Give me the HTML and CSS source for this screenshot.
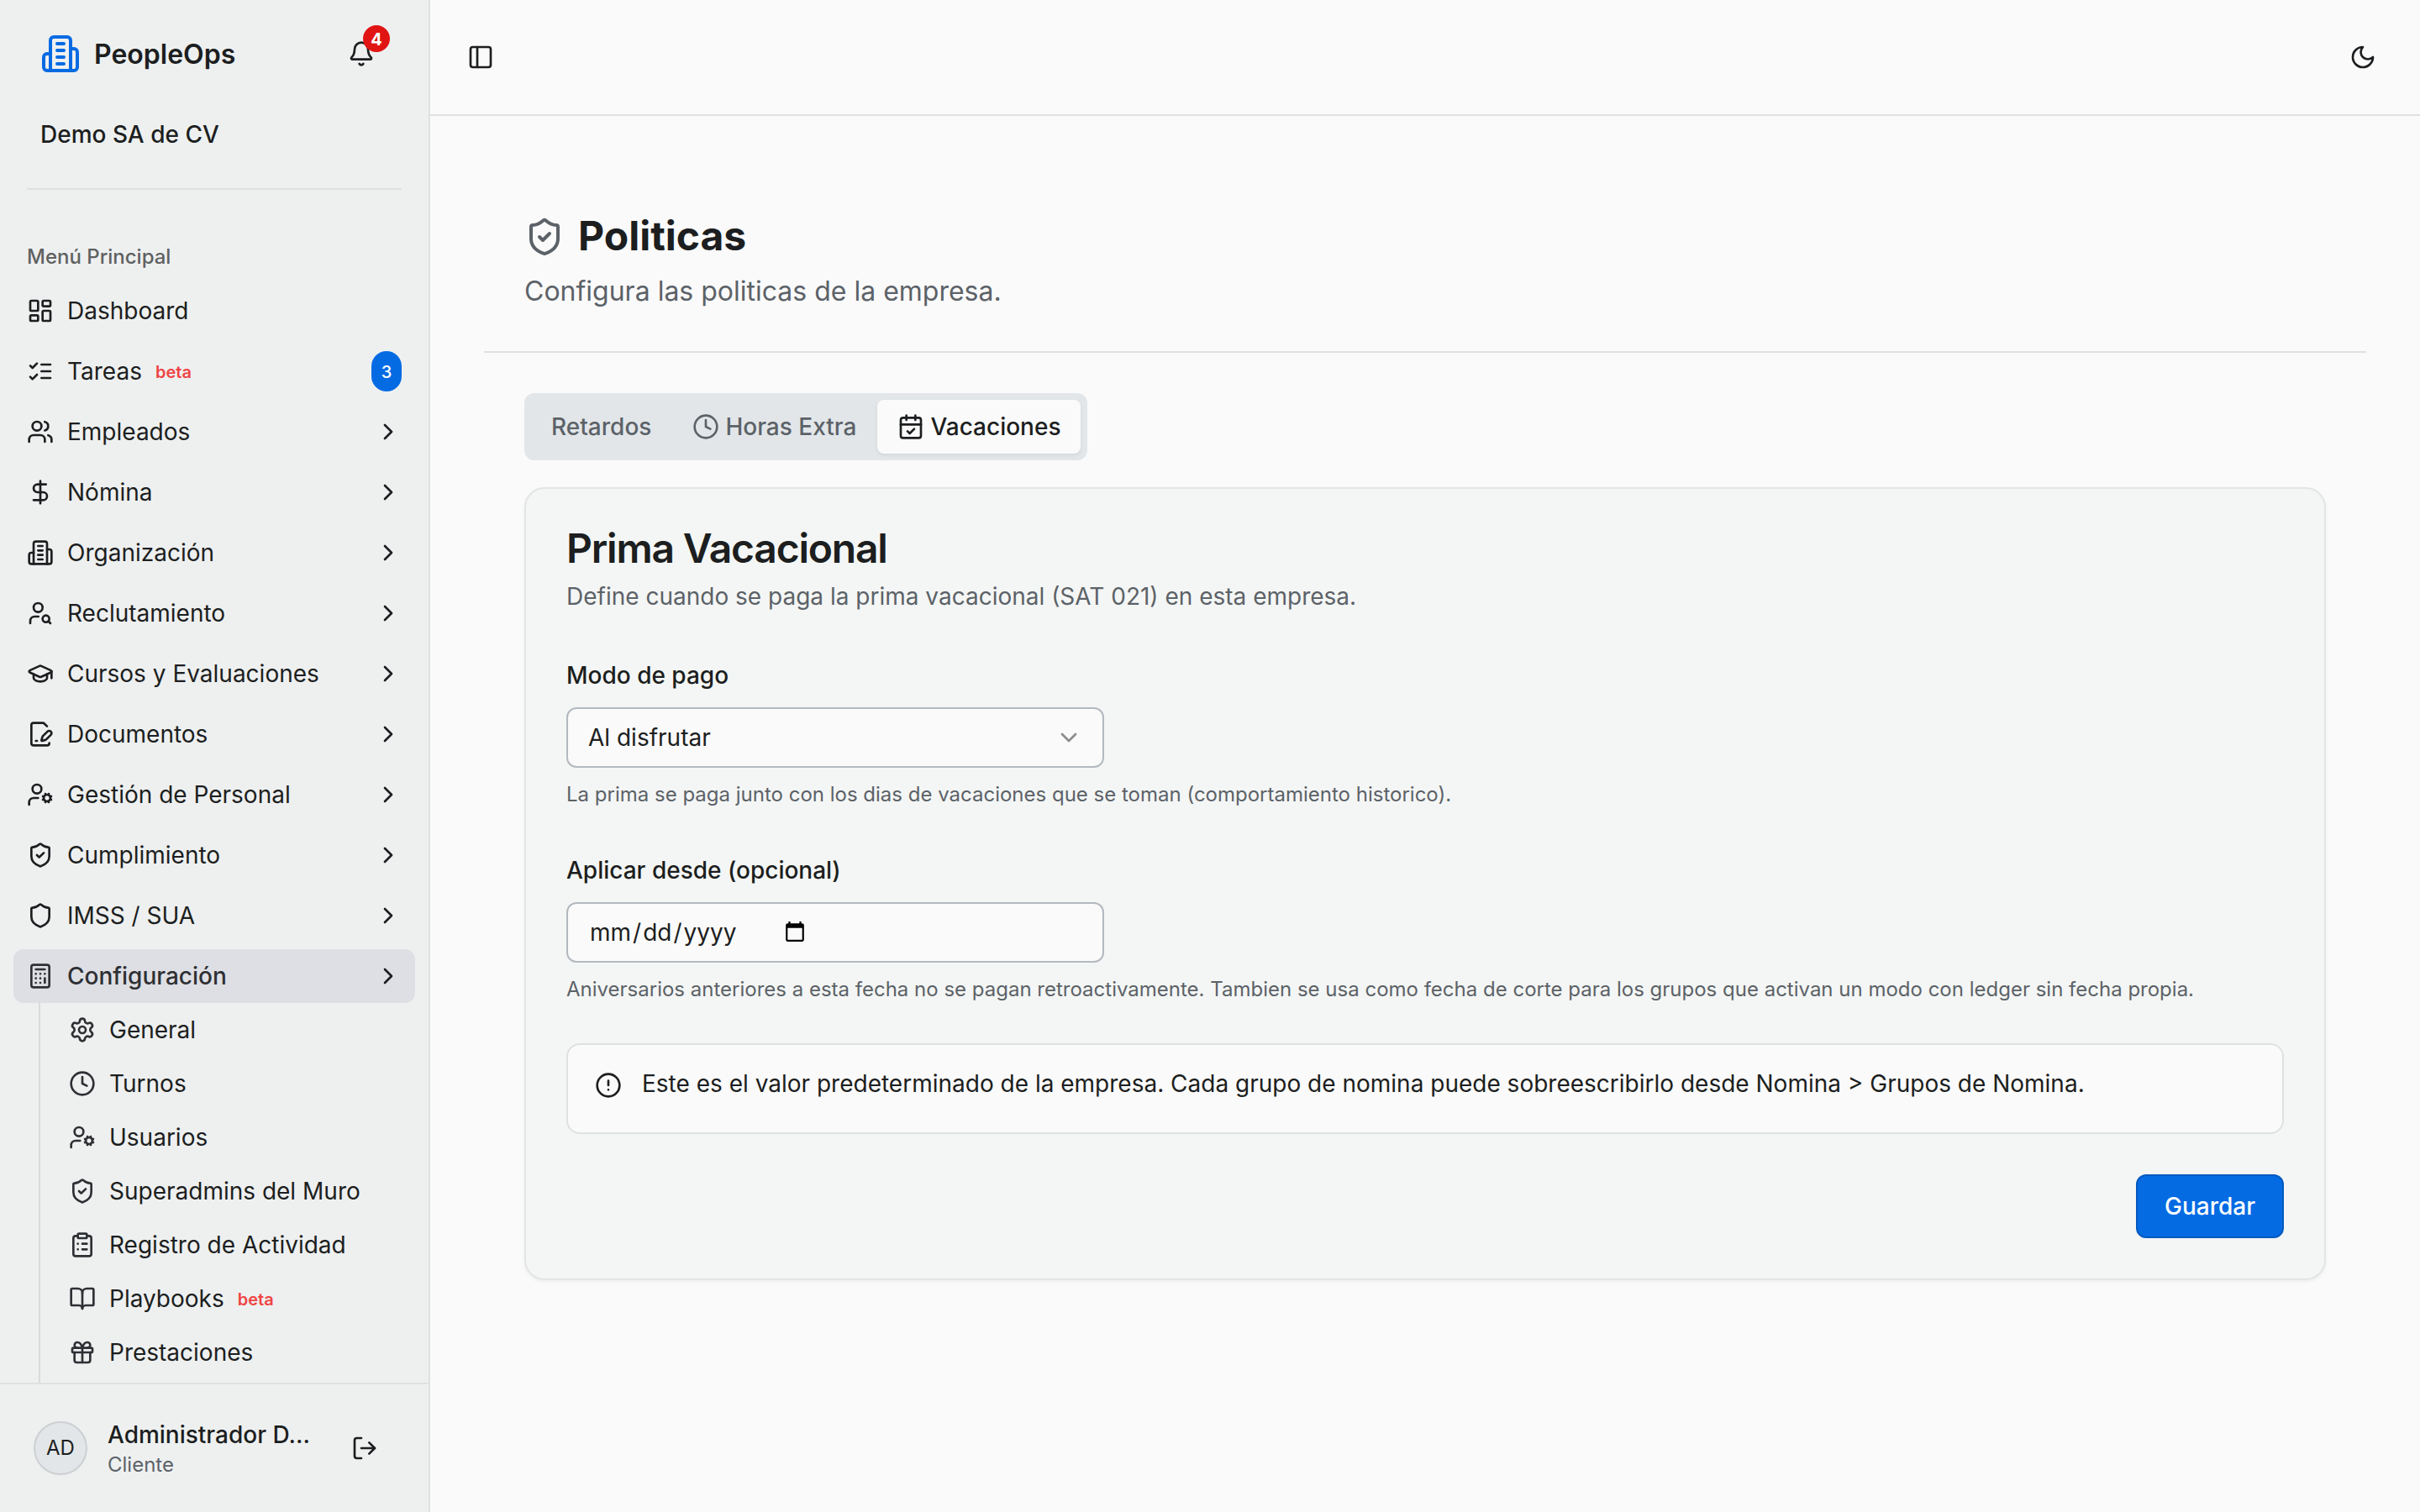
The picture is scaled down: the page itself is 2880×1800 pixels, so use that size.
FILE: index.html
```html
<!DOCTYPE html>
<html lang="es">
<head>
<meta charset="utf-8">
<title>PeopleOps - Politicas</title>
<link rel="stylesheet" href="styles.css">
</head>
<body>
<svg class="sprite" aria-hidden="true">
  <symbol id="building" viewBox="0 0 24 24"><path d="M6 22V4a2 2 0 0 1 2-2h8a2 2 0 0 1 2 2v18Z"/><path d="M6 12H4a2 2 0 0 0-2 2v6a2 2 0 0 0 2 2h2"/><path d="M18 9h2a2 2 0 0 1 2 2v9a2 2 0 0 1-2 2h-2"/><path d="M10 6h4M10 10h4M10 14h4M10 18h4"/></symbol>
  <symbol id="bell" viewBox="0 0 24 24"><path d="M10.268 21a2 2 0 0 0 3.464 0"/><path d="M3.262 15.326A1 1 0 0 0 4 17h16a1 1 0 0 0 .74-1.673C19.41 13.956 18 12.499 18 8A6 6 0 0 0 6 8c0 4.499-1.411 5.956-2.738 7.326"/></symbol>
  <symbol id="dashboard" viewBox="0 0 24 24"><rect width="7" height="9" x="3" y="3" rx="1"/><rect width="7" height="5" x="14" y="3" rx="1"/><rect width="7" height="9" x="14" y="12" rx="1"/><rect width="7" height="5" x="3" y="16" rx="1"/></symbol>
  <symbol id="checks" viewBox="0 0 24 24"><path d="m3 17 2 2 4-4"/><path d="m3 7 2 2 4-4"/><path d="M13 6h8M13 12h8M13 18h8"/></symbol>
  <symbol id="users" viewBox="0 0 24 24"><path d="M16 21v-2a4 4 0 0 0-4-4H6a4 4 0 0 0-4 4v2"/><path d="M16 3.128a4 4 0 0 1 0 7.744"/><path d="M22 21v-2a4 4 0 0 0-3-3.87"/><circle cx="9" cy="7" r="4"/></symbol>
  <symbol id="dollar" viewBox="0 0 24 24"><path d="M12 2v20"/><path d="M17 5H9.5a3.5 3.5 0 0 0 0 7h5a3.5 3.5 0 0 1 0 7H6"/></symbol>
  <symbol id="user-search" viewBox="0 0 24 24"><circle cx="10" cy="7" r="4"/><path d="M10.3 15H7a4 4 0 0 0-4 4v2"/><circle cx="17" cy="17" r="3"/><path d="m21 21-1.9-1.9"/></symbol>
  <symbol id="cap" viewBox="0 0 24 24"><path d="M21.42 10.922a1 1 0 0 0-.019-1.838L12.83 5.18a2 2 0 0 0-1.66 0L2.6 9.08a1 1 0 0 0 0 1.832l8.57 3.908a2 2 0 0 0 1.66 0z"/><path d="M22 10v6"/><path d="M6 12.5V16a6 3 0 0 0 12 0v-3.5"/></symbol>
  <symbol id="file-pen" viewBox="0 0 24 24"><path d="m18 5-2.414-2.414A2 2 0 0 0 14.172 2H6a2 2 0 0 0-2 2v16a2 2 0 0 0 2 2h12a2 2 0 0 0 2-2"/><path d="M21.378 12.626a1 1 0 0 0-3.004-3.004l-4.01 4.012a2 2 0 0 0-.506.854l-.837 2.87a.5.5 0 0 0 .62.62l2.87-.837a2 2 0 0 0 .854-.506z"/><path d="M8 18h1"/></symbol>
  <symbol id="user-cog" viewBox="0 0 24 24"><path d="M10 15H6a4 4 0 0 0-4 4v2"/><path d="m14.305 16.53.923-.382"/><path d="m15.228 13.852-.923-.383"/><path d="m16.852 12.228-.383-.923"/><path d="m16.852 17.772-.383.924"/><path d="m19.148 12.228.383-.923"/><path d="m19.53 18.696-.382-.924"/><path d="m20.772 13.852.924-.383"/><path d="m20.772 16.148.924.383"/><circle cx="18" cy="15" r="3"/><circle cx="9" cy="7" r="4"/></symbol>
  <symbol id="shield" viewBox="0 0 24 24"><path d="M20 13c0 5-3.5 7.5-7.66 8.95a1 1 0 0 1-.67-.01C7.5 20.5 4 18 4 13V6a1 1 0 0 1 1-1c2 0 4.5-1.2 6.24-2.72a1.17 1.17 0 0 1 1.52 0C14.51 3.81 17 5 19 5a1 1 0 0 1 1 1z"/></symbol>
  <symbol id="shield-check" viewBox="0 0 24 24"><path d="M20 13c0 5-3.5 7.5-7.66 8.95a1 1 0 0 1-.67-.01C7.5 20.5 4 18 4 13V6a1 1 0 0 1 1-1c2 0 4.5-1.2 6.24-2.72a1.17 1.17 0 0 1 1.52 0C14.51 3.81 17 5 19 5a1 1 0 0 1 1 1z"/><path d="m9 12 2 2 4-4"/></symbol>
  <symbol id="calculator" viewBox="0 0 24 24"><rect width="16" height="20" x="4" y="2" rx="2"/><path d="M8 6h8M16 14v4M16 10h.01M12 10h.01M8 10h.01M12 14h.01M8 14h.01M12 18h.01M8 18h.01"/></symbol>
  <symbol id="settings" viewBox="0 0 24 24"><path d="M9.671 4.136a2.34 2.34 0 0 1 4.659 0 2.34 2.34 0 0 0 3.319 1.915 2.34 2.34 0 0 1 2.33 4.033 2.34 2.34 0 0 0 0 3.831 2.34 2.34 0 0 1-2.33 4.033 2.34 2.34 0 0 0-3.319 1.915 2.34 2.34 0 0 1-4.659 0 2.34 2.34 0 0 0-3.32-1.915 2.34 2.34 0 0 1-2.33-4.033 2.34 2.34 0 0 0 0-3.831A2.34 2.34 0 0 1 6.35 6.051a2.34 2.34 0 0 0 3.319-1.915"/><circle cx="12" cy="12" r="3"/></symbol>
  <symbol id="clock" viewBox="0 0 24 24"><circle cx="12" cy="12" r="10"/><path d="M12 6v6l4 2"/></symbol>
  <symbol id="clipboard" viewBox="0 0 24 24"><rect width="8" height="4" x="8" y="2" rx="1"/><path d="M16 4h2a2 2 0 0 1 2 2v14a2 2 0 0 1-2 2H6a2 2 0 0 1-2-2V6a2 2 0 0 1 2-2h2"/><path d="M12 11h4M12 16h4M8 11h.01M8 16h.01"/></symbol>
  <symbol id="book" viewBox="0 0 24 24"><path d="M12 7v14"/><path d="M3 18a1 1 0 0 1-1-1V4a1 1 0 0 1 1-1h5a4 4 0 0 1 4 4 4 4 0 0 1 4-4h5a1 1 0 0 1 1 1v13a1 1 0 0 1-1 1h-6a3 3 0 0 0-3 3 3 3 0 0 0-3-3z"/></symbol>
  <symbol id="gift" viewBox="0 0 24 24"><rect width="18" height="4" x="3" y="8" rx="1"/><path d="M12 8v13"/><path d="M19 12v7a2 2 0 0 1-2 2H7a2 2 0 0 1-2-2v-7"/><path d="M7.5 8a2.5 2.5 0 0 1 0-5A4.8 8 0 0 1 12 8a4.8 8 0 0 1 4.5-5 2.5 2.5 0 0 1 0 5"/></symbol>
  <symbol id="logout" viewBox="0 0 24 24"><path d="m16 17 5-5-5-5"/><path d="M21 12H9"/><path d="M9 21H5a2 2 0 0 1-2-2V5a2 2 0 0 1 2-2h4"/></symbol>
  <symbol id="panel" viewBox="0 0 24 24"><rect width="18" height="18" x="3" y="3" rx="2"/><path d="M9 3v18"/></symbol>
  <symbol id="moon" viewBox="0 0 24 24"><path d="M12 3a6 6 0 0 0 9 9 9 9 0 1 1-9-9Z"/></symbol>
  <symbol id="calendar" viewBox="0 0 24 24"><path d="M8 2v4M16 2v4"/><rect width="18" height="18" x="3" y="4" rx="2"/><path d="M3 10h18"/><path d="m9 16 2 2 4-4"/></symbol>
  <symbol id="alert" viewBox="0 0 24 24"><circle cx="12" cy="12" r="10"/><path d="M12 8v4M12 16h.01"/></symbol>
  <symbol id="right" viewBox="0 0 24 24"><path d="m9 18 6-6-6-6"/></symbol>
  <symbol id="down" viewBox="0 0 24 24"><path d="m6 9 6 6 6-6"/></symbol>
</svg>
<div class="app">
  <aside class="sidebar">
    <div class="brand">
      <svg class="icon brand-logo"><use href="#building"/></svg>
      <span class="brand-name">PeopleOps</span>
      <div class="bell"><svg class="icon"><use href="#bell"/></svg><span class="bell-count">4</span></div>
    </div>
    <div class="company">Demo SA de CV</div>
    <div class="side-rule"></div>
    <nav class="nav">
      <div class="nav-label">Menú Principal</div>
      <ul class="menu">
        <li class="item"><svg class="icon"><use href="#dashboard"/></svg><span>Dashboard</span></li>
        <li class="item"><svg class="icon"><use href="#checks"/></svg><span>Tareas</span><span class="beta">beta</span><span class="count">3</span></li>
        <li class="item"><svg class="icon"><use href="#users"/></svg><span>Empleados</span><svg class="icon chev"><use href="#right"/></svg></li>
        <li class="item"><svg class="icon"><use href="#dollar"/></svg><span>Nómina</span><svg class="icon chev"><use href="#right"/></svg></li>
        <li class="item"><svg class="icon"><use href="#building"/></svg><span>Organización</span><svg class="icon chev"><use href="#right"/></svg></li>
        <li class="item"><svg class="icon"><use href="#user-search"/></svg><span>Reclutamiento</span><svg class="icon chev"><use href="#right"/></svg></li>
        <li class="item"><svg class="icon"><use href="#cap"/></svg><span>Cursos y Evaluaciones</span><svg class="icon chev"><use href="#right"/></svg></li>
        <li class="item"><svg class="icon"><use href="#file-pen"/></svg><span>Documentos</span><svg class="icon chev"><use href="#right"/></svg></li>
        <li class="item"><svg class="icon"><use href="#user-cog"/></svg><span>Gestión de Personal</span><svg class="icon chev"><use href="#right"/></svg></li>
        <li class="item"><svg class="icon"><use href="#shield-check"/></svg><span>Cumplimiento</span><svg class="icon chev"><use href="#right"/></svg></li>
        <li class="item"><svg class="icon"><use href="#shield"/></svg><span>IMSS / SUA</span><svg class="icon chev"><use href="#right"/></svg></li>
        <li class="item active"><svg class="icon"><use href="#calculator"/></svg><span>Configuración</span><svg class="icon chev"><use href="#right"/></svg></li>
      </ul>
      <ul class="submenu">
        <li class="subitem"><svg class="icon"><use href="#settings"/></svg><span>General</span></li>
        <li class="subitem"><svg class="icon"><use href="#clock"/></svg><span>Turnos</span></li>
        <li class="subitem"><svg class="icon"><use href="#user-cog"/></svg><span>Usuarios</span></li>
        <li class="subitem"><svg class="icon"><use href="#shield-check"/></svg><span>Superadmins del Muro</span></li>
        <li class="subitem"><svg class="icon"><use href="#clipboard"/></svg><span>Registro de Actividad</span></li>
        <li class="subitem"><svg class="icon"><use href="#book"/></svg><span>Playbooks</span><span class="beta">beta</span></li>
        <li class="subitem"><svg class="icon"><use href="#gift"/></svg><span>Prestaciones</span></li>
      </ul>
    </nav>
    <div class="account">
      <div class="avatar">AD</div>
      <div class="who"><div class="who-name">Administrador D...</div><div class="who-role">Cliente</div></div>
      <svg class="icon"><use href="#logout"/></svg>
    </div>
  </aside>
  <div class="page">
    <header class="topbar">
      <svg class="icon"><use href="#panel"/></svg>
      <svg class="icon"><use href="#moon"/></svg>
    </header>
    <main class="content">
      <div class="page-head">
        <h1 class="title"><svg class="icon title-icon"><use href="#shield-check"/></svg><span class="title-text">Politicas</span></h1>
        <p class="subtitle">Configura las politicas de la empresa.</p>
      </div>
      <div class="body">
        <div class="tabs">
          <div class="tab">Retardos</div>
          <div class="tab"><svg class="icon"><use href="#clock"/></svg><span>Horas Extra</span></div>
          <div class="tab selected"><svg class="icon"><use href="#calendar"/></svg><span>Vacaciones</span></div>
        </div>
        <section class="card">
          <h2 class="card-title">Prima Vacacional</h2>
          <p class="card-desc">Define cuando se paga la prima vacacional (SAT 021) en esta empresa.</p>
          <div class="field">
            <label class="label">Modo de pago</label>
            <div class="control select"><span>Al disfrutar</span><svg class="icon"><use href="#down"/></svg></div>
            <p class="help">La prima se paga junto con los dias de vacaciones que se toman (comportamiento historico).</p>
          </div>
          <div class="field">
            <label class="label">Aplicar desde (opcional)</label>
            <div class="control date"><span class="part">mm</span>/<span class="part">dd</span>/<span class="part">yyyy</span>
              <svg class="date-icon" viewBox="0 0 24 24"><path d="M20 3h-1V1h-2v2H7V1H5v2H4c-1.100 0-2 .9-2 2v16c0 1.100.9 2 2 2h16c1.100 0 2-.9 2-2V5c0-1.100-.9-2-2-2zm0 18H4V8h16v13z"/></svg>
            </div>
            <p class="help">Aniversarios anteriores a esta fecha no se pagan retroactivamente. Tambien se usa como fecha de corte para los grupos que activan un modo con ledger sin fecha propia.</p>
          </div>
          <div class="alert"><svg class="icon"><use href="#alert"/></svg><p class="alert-text">Este es el valor predeterminado de la empresa. Cada grupo de nomina puede sobreescribirlo desde Nomina &gt; Grupos de Nomina.</p></div>
          <div class="actions"><button class="save">Guardar</button></div>
        </section>
      </div>
    </main>
  </div>
</div>
</body>
</html>
```
FILE: styles.css
```css
* { box-sizing: border-box; margin: 0; padding: 0; }
body { font-family: Inter, "Liberation Sans", sans-serif; font-size: 28px; line-height: 40px; color: #1c1e20; background: #fafafa; }
ul { list-style: none; }
.sprite { position: absolute; width: 0; height: 0; }
.icon { width: 32px; height: 32px; flex: none; fill: none; stroke: currentColor; stroke-width: 2; stroke-linecap: round; stroke-linejoin: round; }
.app { display: flex; width: 2880px; height: 1800px; overflow: hidden; }

.sidebar { display: flex; flex-direction: column; width: 512px; flex: none; padding-top: 16px; background: #eef0f0; border-right: 2px solid #dfe1e1; }
.brand { display: flex; align-items: center; height: 96px; padding: 0 64px 0 48px; }
.brand-logo { width: 48px; height: 48px; color: #056be3; }
.brand-name { margin-left: 16px; padding-top: 2px; font-size: 32px; font-weight: 600; }
.bell { position: relative; display: flex; margin-left: auto; }
.bell-count { position: absolute; left: 18px; top: -18px; width: 32px; height: 32px; border-radius: 50%; background: #e11414; color: #fff; font-size: 20px; line-height: 34px; font-weight: 700; text-align: center; }
.company { height: 96px; padding-left: 48px; line-height: 96px; font-weight: 500; }
.side-rule { height: 2px; margin: 16px 32px 0; flex: none; background: #dfe1e1; }
.nav { flex: 1; min-height: 0; margin-top: 48px; padding: 0 16px; overflow: hidden; }
.nav-label { height: 64px; padding-left: 16px; font-size: 24px; line-height: 64px; font-weight: 500; color: #5f6161; }
.menu { display: flex; flex-direction: column; gap: 8px; }
.item { display: flex; align-items: center; height: 64px; padding: 0 16px; border-radius: 12px; }
.item > .icon:first-child { margin-right: 16px; }
.item.active { background: #dedfe4; color: #2e3034; font-weight: 500; }
.item .chev { margin-left: auto; color: #1c1e20; }
.beta { margin-left: 16px; padding-top: 2px; color: #ef4444; font-size: 20px; font-weight: 600; }
.count { width: 36px; height: 48px; margin-left: auto; border-radius: 18px; background: #056be3; color: #fff; font-size: 20px; line-height: 50px; font-weight: 500; text-align: center; }
.submenu { margin-left: 30px; padding: 0 0 16px 34px; border-left: 2px solid #d8dadb; }
.subitem { display: flex; align-items: center; height: 64px; }
.subitem > .icon { margin-right: 16px; color: #2e3034; }
.account { display: flex; align-items: center; height: 154px; flex: none; padding: 0 60px 0 40px; border-top: 2px solid #dfe1e1; }
.avatar { width: 64px; height: 64px; border: 2px solid #cdcfd2; border-radius: 50%; background: #e2e6e9; font-size: 24px; line-height: 60px; text-align: center; }
.who { flex: 1; margin-left: 24px; }
.who-name { font-weight: 500; white-space: nowrap; }
.who-role { font-size: 24px; line-height: 32px; color: #5c6268; }

.page { display: flex; flex-direction: column; flex: 1; }
.topbar { display: flex; align-items: center; justify-content: space-between; height: 138px; padding: 0 52px 0 44px; border-bottom: 2px solid #dfe1e1; }
.content { padding: 112px 64px 0; }
.page-head { height: 170px; padding-left: 48px; border-bottom: 2px solid #dfe1e1; }
.title { display: flex; align-items: center; gap: 16px; height: 64px; font-size: 48px; font-weight: 700; line-height: 62px; }
.title-text { padding-bottom: 2px; }
.title-icon { width: 48px; height: 48px; color: #5c6268; }
.subtitle { margin-top: 9px; font-size: 32px; line-height: 48px; color: #5c6268; }
.body { padding: 48px 48px 0; }
.tabs { display: inline-flex; gap: 1px; height: 80px; padding: 8px; border-radius: 12px; background: #e2e6e9; color: #5c6268; font-weight: 500; vertical-align: top; }
.tab { display: flex; align-items: center; gap: 7px; height: 64px; padding: 0 24px; border-radius: 8px; }
.tab.selected { padding-right: 23px; background: #fafafa; color: #1c1e20; box-shadow: 0 2px 4px rgba(0, 0, 0, 0.07); }
.card { height: 944px; margin-top: 32px; padding: 45px 48px 0; border: 2px solid #e3e5e5; border-radius: 24px; background: #f4f6f5; box-shadow: 0 2px 4px rgba(0, 0, 0, 0.05); }
.card-title { font-size: 48px; line-height: 52px; font-weight: 600; letter-spacing: -1.2px; }
.card-desc { margin-top: 11px; color: #5c6268; }
.field { height: 232px; padding-top: 54px; }
.label { display: block; font-weight: 500; }
.control { display: flex; align-items: center; width: 640px; height: 72px; margin-top: 18px; padding: 0 24px; border: 2px solid #b3b9bf; border-radius: 12px; background: #fafafa; }
.select { justify-content: space-between; }
.select .icon { color: #8b8c8d; }
.part { padding: 0 2px; }
.date-icon { width: 26px; height: 26px; margin: 0 0 2px 54px; fill: #000; }
.help { margin-top: 16px; font-size: 24px; line-height: 32px; color: #5c6268; }
.alert { display: flex; gap: 24px; height: 108px; margin-top: 48px; padding: 32px 32px 0; border: 2px solid #dfe1e1; border-radius: 16px; background: #fafafa; }
.alert-text { margin-top: -6px; }
.actions { display: flex; justify-content: flex-end; margin-top: 48px; }
.save { width: 176px; height: 76px; border: 2px solid #045ac0; border-radius: 12px; background: #056be3; color: #fff; font: inherit; font-weight: 500; }
```
